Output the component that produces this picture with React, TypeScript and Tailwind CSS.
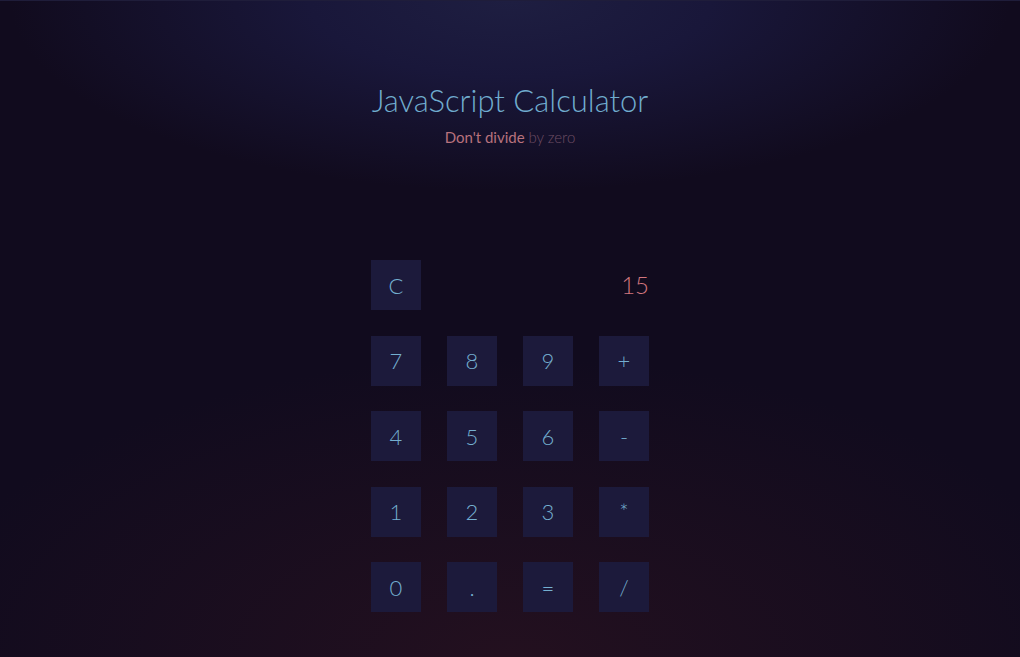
import React, { useState } from "react";

const keys = ["7", "8", "9", "+", "4", "5", "6", "-", "1", "2", "3", "*", "0", ".", "=", "/"];

const Key = ({ label, onClick }: { label: string; onClick: () => void }) => (
  <button
    onClick={onClick}
    className="w-[50px] h-[50px] bg-[#1c1a3b] text-[#74afd0] text-[22px] font-light flex items-center justify-center"
  >
    {label}
  </button>
);

const App = () => {
  const [display, setDisplay] = useState("15");

  const press = (k: string) => {
    if (k === "=") {
      try {
        // eslint-disable-next-line no-new-func
        setDisplay(String(Function(`return (${display})`)()));
      } catch {
        setDisplay("Error");
      }
      return;
    }
    setDisplay(display === "0" ? k : display + k);
  };

  return (
    <div
      className="min-h-screen w-full flex flex-col items-center bg-[#110b1e] bg-[radial-gradient(ellipse_500px_190px_at_50%_0%,#1e1e41_0%,#19173a_40%,transparent_100%),radial-gradient(ellipse_600px_300px_at_50%_100%,#23101f_0%,transparent_100%)] border-t border-[#1f1d3a]"
      style={{ fontFamily: "Lato, 'Open Sans', sans-serif" }}
    >
      <h1 className="mt-[79px] text-[31px] leading-[40px] font-light text-[#70acce]">
        JavaScript Calculator
      </h1>
      <p className="mt-[7px] text-[15px] leading-[20px]">
        <span className="text-[#b8727d] font-normal">Don't divide</span>{" "}
        <span className="text-[#6e4d64] font-light">by zero</span>
      </p>

      <div className="mt-[113px] grid grid-cols-[repeat(4,50px)] gap-x-[26px] gap-y-[25.5px]">
        <Key label="C" onClick={() => setDisplay("0")} />
        <div className="col-span-3 flex items-center justify-end text-[24px] font-light text-[#d2767f]">
          {display}
        </div>
        {keys.map((k) => (
          <Key key={k} label={k} onClick={() => press(k)} />
        ))}
      </div>
    </div>
  );
};

export default App;
